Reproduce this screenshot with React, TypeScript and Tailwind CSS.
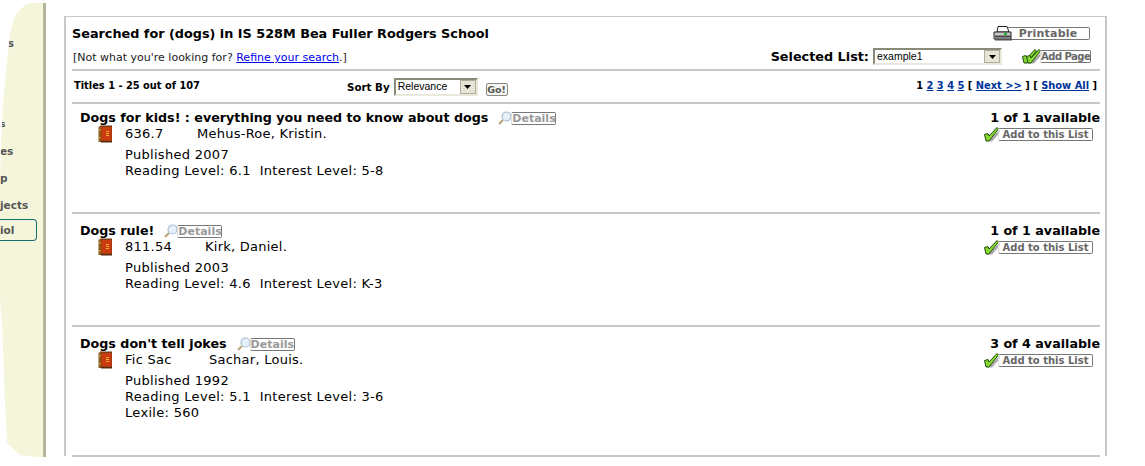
import React from 'react';

const BOOKS = [
  { title: "Dogs for kids! : everything you need to know about dogs", call: '636.7', callW: 'w-[72px]', author: 'Mehus-Roe, Kristin.', avail: '1 of 1 available', pub: 'Published 2007', reading: '6.1', interest: '5-8', rowH: 'h-[110px]', pad: 'pt-[6px]' },
  { title: 'Dogs rule!', call: '811.54', callW: 'w-[80px]', author: 'Kirk, Daniel.', avail: '1 of 1 available', pub: 'Published 2003', reading: '4.6', interest: 'K-3', rowH: 'h-[113px]', pad: 'pt-[9px]' },
  { title: "Dogs don't tell jokes", call: 'Fic Sac', callW: 'w-[84px]', author: 'Sachar, Louis.', avail: '3 of 4 available', pub: 'Published 1992', reading: '5.1', interest: '3-6', lexile: '560', rowH: 'h-[130px]', pad: 'pt-[9px]' },
];

// ── Small legacy-style icons ──────────────────────────────────────
function BookIcon() {
  return (
    <svg width="15" height="18" viewBox="0 0 15 18" className="shrink-0 -mt-px">
      <rect x="2" y="0.5" width="12" height="16" fill="#7a3a12" />
      <rect x="0.5" y="1.5" width="3" height="15.5" fill="#8a5a1c" />
      <rect x="3.5" y="2" width="10" height="13.5" fill="#cc3a10" />
      <rect x="8" y="6" width="3" height="1" fill="#f0b030" />
      <rect x="8" y="8" width="3" height="1" fill="#f0b030" />
      <rect x="8" y="10" width="3" height="1" fill="#f0b030" />
      <rect x="1" y="4" width="1.5" height="1.5" fill="#e0a030" />
      <rect x="1" y="12" width="1.5" height="1.5" fill="#e0a030" />
      <rect x="3" y="16" width="11" height="1.5" fill="#5a2a0c" />
    </svg>
  );
}

function CheckIcon() {
  return (
    <svg width="16" height="15" viewBox="0 0 16 15" className="shrink-0">
      <path d="M4 14.5 L15.5 3 L15.5 6 L8 14.5 Z" fill="#a8a8a8" />
      <path d="M0.5 7.5 L4 6.5 L5 9 L13 0.5 L14.5 2 L5 14 L2 14 Z" fill="#86d830" stroke="#1f4a0c" strokeWidth="1" strokeLinejoin="round" />
    </svg>
  );
}

function MagnifierIcon() {
  return (
    <svg width="15" height="14" viewBox="0 0 15 14" className="shrink-0">
      <path d="M5 9 L1 13" stroke="#b9a27a" strokeWidth="2" />
      <circle cx="8.5" cy="5.5" r="4.5" fill="#e6f0fa" stroke="#a9bdd0" strokeWidth="1.2" />
    </svg>
  );
}

function PrinterIcon() {
  return (
    <svg width="20" height="15" viewBox="0 0 20 15" className="shrink-0 relative z-10">
      <path d="M5 0.5 H14 L16 6 H4 Z" fill="#fff" stroke="#222" />
      <path d="M1 6 H18 V13 H1 Z" fill="#c9c9c9" stroke="#222" />
      <path d="M2 10.5 H18" stroke="#444" strokeWidth="2" />
      <rect x="11" y="7" width="3" height="2" fill="#22b030" />
      <rect x="2" y="13" width="17" height="1.5" fill="#555" />
    </svg>
  );
}

function XpSelect({ value, w, h }: { value: string; w: string; h: string }) {
  return (
    <div className={`${w} ${h} flex items-stretch border-2 border-[#8a8a78] border-r-[#e8e8dc] border-b-[#e8e8dc] bg-white`}>
      <span className="flex-1 pl-[2px] text-[10.5px] leading-[13px] font-normal font-['Liberation_Sans',sans-serif] text-black">{value}</span>
      <span className="w-[16px] flex items-center justify-center bg-[#e6e4d4] border border-[#b0ae9c]">
        <svg width="7" height="4" viewBox="0 0 7 4"><path d="M0 0 H7 L3.5 4 Z" fill="#000" /></svg>
      </span>
    </div>
  );
}

function ActionButton({ children, className = '' }: { children: React.ReactNode; className?: string }) {
  return (
    <span className={`inline-block whitespace-nowrap border border-[#777] border-l-[#ddd] rounded-[2px] font-bold text-[#666] ${className}`}>
      {children}
    </span>
  );
}

function Sidebar() {
  return (
    <div className="w-[46px] h-[454px] mt-[3px] shrink-0 bg-[#f5f5dc] border-r-[3px] border-[#b4b49c] [clip-path:polygon(30px_0,24px_3px,15px_12px,10px_30px,8px_50px,3px_100px,1px_140px,0_180px,0_300px,2px_320px,5px_400px,7px_440px,20px_452px,36px_454px,100%_100%,100%_0)] overflow-hidden text-[10.5px] font-bold text-[#555]">
      <div className="h-[31px]" />
      <div className="h-[18px] text-right pr-[29px] leading-[18px]">s</div>
      <div className="h-[63px]" />
      <div className="h-[18px] text-right pr-[38px] leading-[18px] text-[9px]">s</div>
      <div className="h-[9px]" />
      <div className="h-[18px] text-right pr-[30px] leading-[18px] whitespace-nowrap">es</div>
      <div className="h-[9px]" />
      <div className="h-[18px] text-right pr-[36px] leading-[18px]">p</div>
      <div className="h-[9px]" />
      <div className="h-[18px] leading-[18px] whitespace-nowrap">jects</div>
      <div className="h-[5px]" />
      <div className="h-[22px] w-[37px] border border-[#1c6e6e] border-l-0 rounded-r-[4px] leading-[20px] whitespace-nowrap">iol</div>
    </div>
  );
}

export default function App() {
  return (
    <div className="w-[1145px] h-[466px] bg-white flex items-start overflow-hidden font-['DejaVu_Sans',sans-serif] text-black">
      <Sidebar />

      {/* Results panel */}
      <div className="ml-[18px] mt-[16px] w-[1043px] h-[440px] border-l-2 border-r-2 border-t border-[#c8c8c8] pl-[6px] pr-[6px]">
        {/* Search header */}
        <div className="h-[54px] flex justify-between border-b-2 border-[#c8c8c8] -mr-px">
          <div>
            <h1 className="mt-[8px] text-[12.8px] leading-[17px] font-bold">
              Searched for (dogs) in IS 528M Bea Fuller Rodgers School
            </h1>
            <p className="mt-[9px] pl-px text-[11px] leading-[14px] text-[#222]">
              [Not what you're looking for? <a className="text-[#0000ee] underline">Refine your search</a>.]
            </p>
          </div>
          <div className="flex flex-col items-end pr-[8px]">
            <div className="mt-[9px] mr-[2px] flex items-center">
              <PrinterIcon />
              <ActionButton className="-ml-[7px] w-[84px] h-[13px] text-center text-[11px] leading-[11px] tracking-[0.2px]">Printable</ActionButton>
            </div>
            <div className="mt-[6px] mr-[1px] flex items-center">
              <span className="text-[12.8px] font-bold mr-[4px]">Selected List:</span>
              <XpSelect value="example1" w="w-[129px]" h="h-[17px]" />
              <span className="ml-[20px] flex items-center">
                <CheckIcon />
                <span className="-ml-[12px]"><CheckIcon /></span>
                <ActionButton className="-ml-[2px] h-[13px] w-[51px] text-center text-[10px] leading-[11px] tracking-[-0.5px]">Add Page</ActionButton>
              </span>
            </div>
          </div>
        </div>

        {/* Paging bar */}
        <div className="h-[33px] flex items-center border-b-2 border-[#c8c8c8] -mr-px text-[10px] font-bold">
          <span className="pl-[2px] w-[275px] shrink-0 text-[9.85px]">Titles 1 - 25 out of 107</span>
          <span className="mr-[4px] pt-[2px] text-[10.3px]">Sort By</span>
          <XpSelect value="Relevance" w="w-[84px]" h="h-[18px]" />
          <span className="ml-[8px] mt-[5px] w-[22px] h-[13px] border border-[#888] rounded-[2px] bg-[#f4f4ec] text-center text-[9.5px] leading-[11px] text-[#555]">Go!</span>
          <span className="ml-auto pr-[3px] text-[9.9px] whitespace-nowrap">
            1{' '}
            <a className="text-[#00339a] underline">2</a>{' '}
            <a className="text-[#00339a] underline">3</a>{' '}
            <a className="text-[#00339a] underline">4</a>{' '}
            <a className="text-[#00339a] underline">5</a>{' '}
            [ <a className="text-[#00339a] underline">Next &gt;&gt;</a> ] [ <a className="text-[#00339a] underline">Show All</a> ]
          </span>
        </div>

        {/* Result rows */}
        {BOOKS.map(book => (
          <div key={book.title} className={`${book.rowH} ${book.pad} border-b-2 border-[#c8c8c8] -mr-px flex justify-between`}>
            <div className="pl-[8px]">
              <div className="flex items-center h-[16px]">
                <span className="text-[12.7px] font-bold leading-[16px]">{book.title}</span>
                <span className="ml-[10px] flex items-center">
                  <MagnifierIcon />
                  <ActionButton className="-ml-[2px] h-[13px] w-[45px] text-center text-[11px] leading-[11px] text-[#999]">Details</ActionButton>
                </span>
              </div>
              <div className="flex text-[13px] tracking-[0.25px] leading-[16px] pl-[18px]">
                <BookIcon />
                <span className={`ml-[12px] ${book.callW}`}>{book.call}</span>
                <span>{book.author}</span>
              </div>
              <div className="pl-[45px] mt-[4px] text-[13px] tracking-[0.3px] leading-[16px]">
                <div>{book.pub}</div>
                <div>Reading Level: {book.reading}&nbsp;&nbsp;Interest Level: {book.interest}</div>
                {book.lexile && <div>Lexile: {book.lexile}</div>}
              </div>
            </div>
            <div className="flex flex-col items-end">
              <span className="text-[12.7px] font-bold leading-[16px] whitespace-nowrap">{book.avail}</span>
              <div className="flex items-center pr-[7px] mt-px">
                <CheckIcon />
                <ActionButton className="-ml-[2px] w-[95px] h-[13px] text-center text-[10px] leading-[11px]">Add to this List</ActionButton>
              </div>
            </div>
          </div>
        ))}
      </div>
    </div>
  );
}
